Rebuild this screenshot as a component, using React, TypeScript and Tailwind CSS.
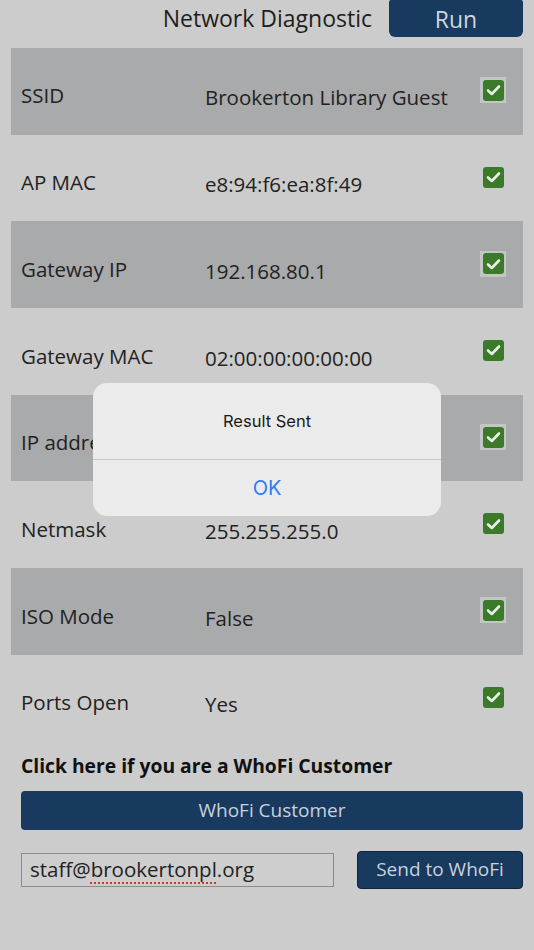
const rows = [
  { label: "SSID", value: "Brookerton Library Guest" },
  { label: "AP MAC", value: "e8:94:f6:ea:8f:49" },
  { label: "Gateway IP", value: "192.168.80.1" },
  { label: "Gateway MAC", value: "02:00:00:00:00:00" },
  { label: "IP address", value: "192.168.80.120" },
  { label: "Netmask", value: "255.255.255.0" },
  { label: "ISO Mode", value: "False" },
  { label: "Ports Open", value: "Yes" },
];

function Check({ framed }: { framed: boolean }) {
  return (
    <div
      className={`flex h-[26px] w-[26px] items-center justify-center ${
        framed ? "bg-[#c4c5c5]" : ""
      }`}
    >
      <div className="flex h-[21px] w-[21px] items-center justify-center rounded-[3px] bg-[#3a7a29]">
        <svg width="15" height="12" viewBox="0 0 15 12">
          <path
            d="M2 6.5 L5.8 10 L13 2.5"
            fill="none"
            stroke="#e8efe6"
            strokeWidth="2.6"
            strokeLinecap="round"
            strokeLinejoin="round"
          />
        </svg>
      </div>
    </div>
  );
}

export default function App() {
  return (
    <div
      className="relative h-[950px] w-[534px] overflow-hidden bg-[#cccccc] text-[#222]"
      style={{ fontFamily: '"Open Sans", sans-serif' }}
    >
      <div className="flex h-[48px] items-start justify-end gap-[17px] pr-[11px]">
        <span className="mt-[3px] text-[23px] leading-[30px] text-[#1e1e1e]">
          Network Diagnostic
        </span>
        <button className="h-[37px] w-[134px] rounded-b-[6px] rounded-t-[2px] bg-[#183a5f] text-[23px] leading-[36px] text-[#cfd6de]">
          Run
        </button>
      </div>

      <div className="flex flex-col px-[11px]">
        {rows.map((r, i) => (
          <div
            key={r.label}
            className={`flex h-[86.7px] items-center ${
              i % 2 === 0 ? "bg-[#a9aaab]" : ""
            }`}
          >
            <span className="mt-[9px] w-[194px] pl-[10px] text-[20.5px]">
              {r.label}
            </span>
            <span className="mt-[13px] flex-1 text-[20.5px]">{r.value}</span>
            <div className="mr-[17px] mb-[2px]">
              <Check framed={i % 2 === 0} />
            </div>
          </div>
        ))}
      </div>

      <div className="pl-[21px] pr-[11px] pt-[11px]">
        <p className="text-[19.3px] font-bold leading-[26px] text-[#111]">
          Click here if you are a WhoFi Customer
        </p>
        <button className="mt-[12px] h-[39px] w-full rounded-[4px] bg-[#183a5f] text-[19px] text-[#c9d1db]">
          WhoFi Customer
        </button>
        <div className="mt-[21px] flex items-center justify-between">
          <div className="flex h-[34px] w-[313px] items-center border border-[#8b8b8b] bg-[#cecece] pl-[8px] text-[20.5px] text-[#222]">
            staff@
            <span className="underline decoration-[#c0392b] decoration-dotted decoration-2 underline-offset-[5px]">
              brookertonpl
            </span>
            .org
          </div>
          <button className="h-[38px] w-[166px] rounded-[4px] border border-[#0f2640] bg-[#183a5f] text-[19px] text-[#c9d1db]">
            Send to WhoFi
          </button>
        </div>
      </div>

      <div
        className="absolute left-[93px] top-[383px] w-[348px] overflow-hidden rounded-[14px] bg-[#ebebeb]"
        style={{ fontFamily: "Inter, Roboto, sans-serif" }}
      >
        <div className="flex h-[76px] items-center justify-center text-[16.5px] text-[#1a1a1a]">
          Result Sent
        </div>
        <div className="h-px bg-[#c9c9c9]" />
        <div className="flex h-[56px] items-center justify-center text-[20px] text-[#2f7cf6]">
          OK
        </div>
      </div>
    </div>
  );
}
